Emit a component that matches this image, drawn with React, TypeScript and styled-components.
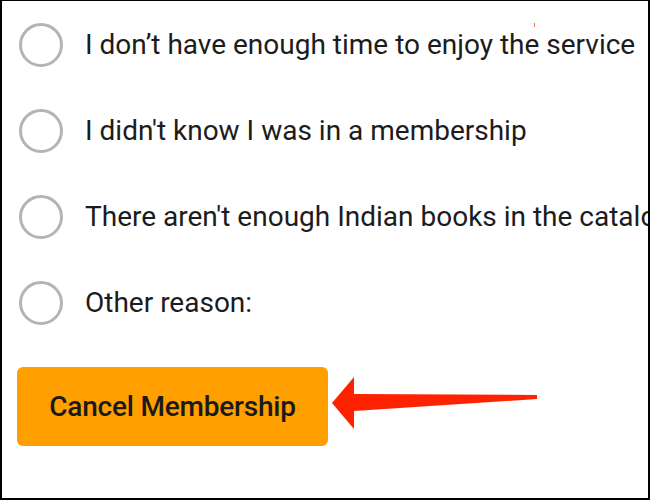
import React from "react";
import styled, { createGlobalStyle } from "styled-components";

const Global = createGlobalStyle`
  html, body { margin: 0; padding: 0; background: #fff; }
  body { font-family: Roboto, "Liberation Sans", sans-serif; }
`;

const Frame = styled.div`
  position: relative;
  box-sizing: border-box;
  width: 650px;
  height: 500px;
  overflow: hidden;
  background: #fff;
  border-style: solid;
  border-color: #000;
  border-width: 1px 2px 2px 2px;
  padding: 22px 0 0 17px;
`;

const List = styled.div`
  display: flex;
  flex-direction: column;
  gap: 42px;
`;

const Option = styled.label`
  display: flex;
  align-items: center;
  gap: 22px;
  height: 44px;
  white-space: nowrap;
`;

const Radio = styled.span`
  flex: none;
  box-sizing: border-box;
  width: 44px;
  height: 44px;
  border-radius: 50%;
  border: 3px solid #b4b4b4;
`;

const Label = styled.span`
  font-family: Roboto, "Liberation Sans", sans-serif;
  font-size: 28px;
  color: #1c1c1c;
  line-height: 1;
`;

const ActionRow = styled.div`
  display: flex;
  align-items: center;
  margin-top: 42px;
  margin-left: -2px;
`;

const CancelButton = styled.button`
  box-sizing: border-box;
  width: 311px;
  height: 79px;
  border: none;
  border-radius: 6px;
  background: #ff9f00;
  color: #1a1a1a;
  font-family: Roboto, "Liberation Sans", sans-serif;
  font-weight: 500;
  font-size: 28px;
  letter-spacing: -0.2px;
  padding: 0;
  cursor: pointer;
`;

const Arrow = styled.svg`
  flex: none;
  margin-left: 4px;
  margin-top: -8px;
`;

const Tick = styled.span`
  position: absolute;
  left: 532px;
  top: 22px;
  width: 1px;
  height: 4px;
  background: #ff6a5a;
`;

const reasons = [
  "I don\u2019t have enough time to enjoy the service",
  "I didn't know I was in a membership",
  "There aren't enough Indian books in the catalogue",
  "Other reason:",
];

export default function App() {
  return (
    <>
      <Global />
      <Frame>
        <Tick />
        <List>
          {reasons.map((r) => (
            <Option key={r}>
              <Radio />
              <Label>{r}</Label>
            </Option>
          ))}
        </List>
        <ActionRow>
          <CancelButton>Cancel Membership</CancelButton>
          <Arrow width="210" height="52" viewBox="0 0 210 52">
            <polygon
              points="0,26 22,0 22,17 205,18 205,22 22,34 22,52"
              fill="#ff2200"
            />
          </Arrow>
        </ActionRow>
      </Frame>
    </>
  );
}
